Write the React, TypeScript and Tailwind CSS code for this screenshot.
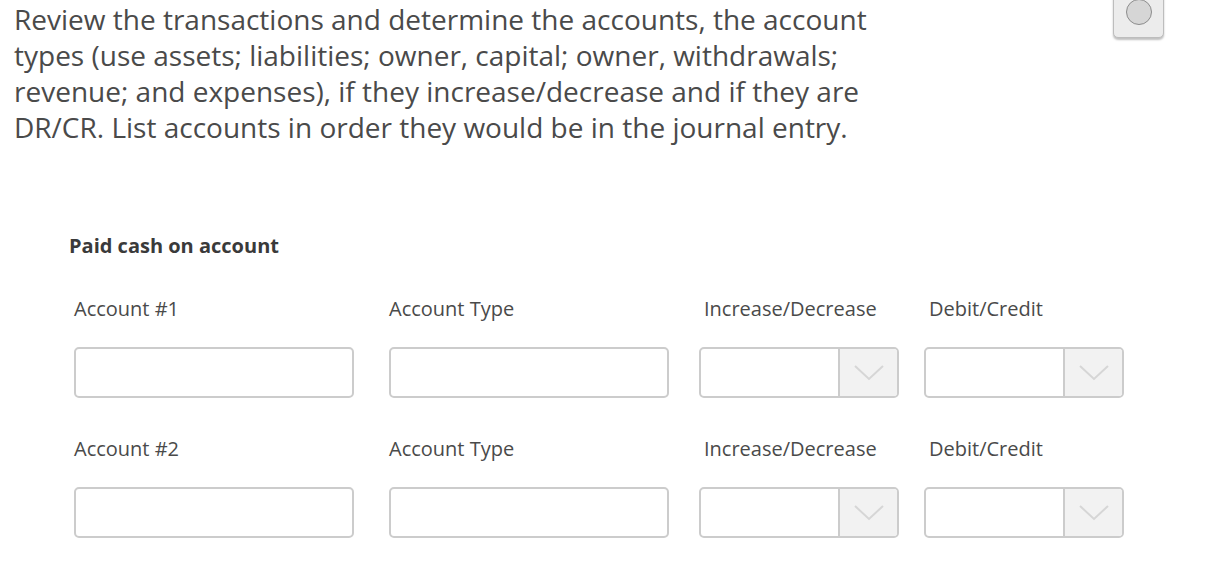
/**
 * Journal entry question
 * Accounts, types, increase/decrease and DR/CR for one transaction
 */

const rows = [
  { label: 'Account #1' },
  { label: 'Account #2' },
];

function TextBox() {
  return (
    <div className="w-[280px] h-[51px] border-2 border-[#cccccc] rounded-[5px] bg-white" />
  );
}

function SelectBox() {
  return (
    <div className="w-[200px] h-[51px] border-2 border-[#cccccc] rounded-[5px] bg-white flex overflow-hidden">
      <div className="flex-1" />
      <div className="w-[59px] border-l-2 border-[#cccccc] bg-[#f2f2f2] flex items-center justify-center">
        <svg width="30" height="16" viewBox="0 0 30 16" fill="none">
          <path d="M1 1 L15 14 L29 1" stroke="#d6d6d6" strokeWidth="2" />
        </svg>
      </div>
    </div>
  );
}

function EntryRow({ label }: { label: string }) {
  return (
    <div className="flex flex-col gap-[26px]">
      <div className="flex text-[20px] leading-[24px] text-[#4a4a4a]">
        <span className="w-[315px]">{label}</span>
        <span className="w-[315px]">Account Type</span>
        <span className="w-[225px]">Increase/Decrease</span>
        <span>Debit/Credit</span>
      </div>
      <div className="flex items-center">
        <TextBox />
        <div className="ml-[35px]">
          <TextBox />
        </div>
        <div className="ml-[30px]">
          <SelectBox />
        </div>
        <div className="ml-[25px]">
          <SelectBox />
        </div>
      </div>
    </div>
  );
}

export default function App() {
  return (
    <div
      className="relative w-[1227px] h-[567px] bg-white overflow-hidden"
      style={{ fontFamily: '"Open Sans", "Noto Sans", sans-serif' }}
    >
      {/* Toggle button in the corner */}
      <div className="absolute left-[1113px] top-[-13px] w-[51px] h-[51px] bg-[#ececec] border border-[#bdbdbd] rounded-[5px] shadow-[0_2px_2px_rgba(0,0,0,0.25)] flex items-end justify-center pb-[12px]">
        <div className="w-[26px] h-[26px] rounded-full bg-[#d6d6d6] border border-[#8c8c8c]" />
      </div>

      {/* Question text */}
      <p className="pl-[14px] pt-[1px] text-[28px] leading-[36px] text-[#4a4a4a]">
        Review the transactions and determine the accounts, the account
        <br />
        types (use assets; liabilities; owner, capital; owner, withdrawals;
        <br />
        revenue; and expenses), if they increase/decrease and if they are
        <br />
        DR/CR. List accounts in order they would be in the journal entry.
      </p>

      {/* Transaction */}
      <div className="mt-[89px] pl-[69px]">
        <h3 className="text-[20px] leading-[24px] font-bold text-[#3a3a3a]">Paid cash on account</h3>
        <div className="mt-[39px] pl-[5px] flex flex-col gap-[39px]">
          {rows.map((row) => (
            <EntryRow key={row.label} label={row.label} />
          ))}
        </div>
      </div>
    </div>
  );
}
